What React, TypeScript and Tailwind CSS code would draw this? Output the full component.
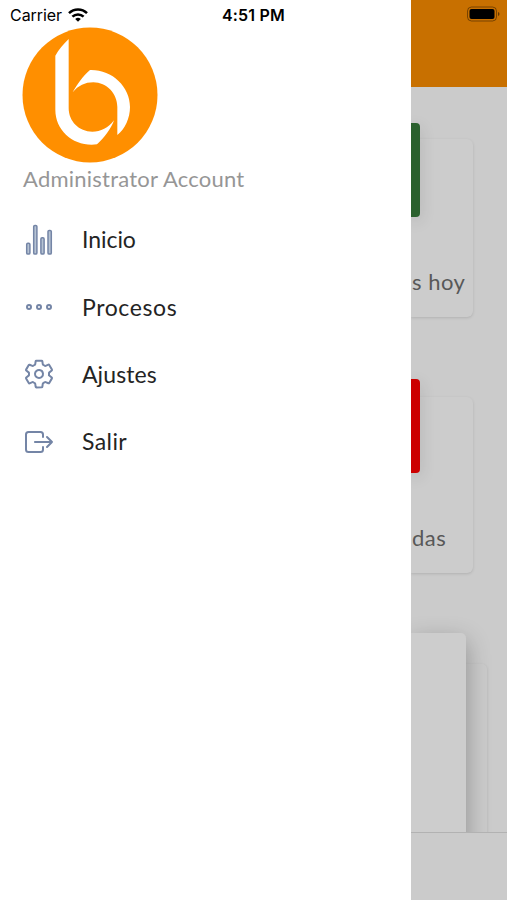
import { IoEllipsisHorizontalOutline, IoSettingsOutline, IoExitOutline } from "react-icons/io5";

function StatsIcon({ className }: { className?: string }) {
  return (
    <svg viewBox="0 0 32 32" className={className} fill="#b6c3d3" stroke="currentColor" strokeWidth="1.5">
      <rect x="3.700" y="19.300" width="3.200" height="10.800" rx="1.200" />
      <rect x="10.700" y="1.400" width="3.200" height="28.700" rx="1.200" />
      <rect x="17.900" y="13.700" width="3.200" height="16.400" rx="1.200" />
      <rect x="25" y="6.400" width="3.300" height="23.700" rx="1.200" />
    </svg>
  );
}

const menuItems = [
  { label: "Inicio", icon: StatsIcon, spacing: "tracking-[-0.05px]" },
  { label: "Procesos", icon: IoEllipsisHorizontalOutline, spacing: "tracking-[0.6px]" },
  { label: "Ajustes", icon: IoSettingsOutline, spacing: "tracking-[0.1px]" },
  { label: "Salir", icon: IoExitOutline, spacing: "tracking-[0.4px]" },
];

function Logo() {
  return (
    <svg viewBox="66 82 408 408" className="block h-[136px] w-[136px]">
      <circle cx="270" cy="286" r="202.5" fill="#ff8f00" />
      <path
        fill="#fff"
        d="M206 118C190 134 176 150 166 168V330C166 390 215 435 275 435L291 434C312 415 335 385 342 362C325 385 302 396 277 396C237 396 206 365 206 325Z"
      />
      <path
        fill="#fff"
        d="M218 278C230 255 250 228 270 211C335 209 390 260 390 322C390 355 375 388 352 406V322C352 282 320 248 280 248C255 248 235 258 218 278Z"
      />
    </svg>
  );
}

function WifiIcon() {
  return (
    <svg viewBox="0 0 20 14" className="h-[14px] w-5" fill="none" stroke="#000" strokeWidth="2.5">
      <path d="M1 5.200a12.800 12.800 0 0 1 18 0" />
      <path d="M4.400 8.700a8 8 0 0 1 11.200 0" />
      <path d="M10 13.800L7.200 11a4 4 0 0 1 5.600 0z" fill="#000" stroke="none" />
    </svg>
  );
}

function StatusBar() {
  return (
    <div className="absolute inset-x-0 top-0 z-20 grid h-[29px] grid-cols-3 items-center pl-[10px] pr-[7px] font-['Inter',sans-serif] text-black">
      <div className="flex items-center gap-[6px] text-[16px] tracking-[-0.05px]">
        <span>Carrier</span>
        <WifiIcon />
      </div>
      <div className="-ml-[3px] text-center text-[16px] font-semibold tracking-[0.2px]">4:51 PM</div>
      <svg viewBox="0 0 34 16" className="-mt-[2px] h-4 w-[34px] justify-self-end">
        <rect x="1.5" y="1" width="29" height="14" rx="4" fill="none" stroke="#000" strokeOpacity="0.4" />
        <rect x="3.5" y="3" width="25" height="10" rx="2" />
        <path d="M32 6v4q1.500-.7 1.500-2t-1.500-2z" fillOpacity="0.5" />
      </svg>
    </div>
  );
}

function Drawer() {
  return (
    <aside className="flex h-full w-[411px] shrink-0 flex-col bg-white pt-[27px]">
      <div className="pl-[22px]">
        <Logo />
        <p className="pl-px text-[22px] leading-8 tracking-[0.23px] text-[#969696]">Administrator Account</p>
      </div>
      <nav className="mt-[11px] flex flex-col">
        {menuItems.map(({ label, icon: Icon, spacing }) => (
          <a key={label} className="flex h-[67.3px] items-center gap-[27.5px] pl-[22.5px]">
            <Icon className="h-8 w-8 text-[#7485a6]" />
            <span className={`text-[23px] text-[#242424] ${spacing}`}>{label}</span>
          </a>
        ))}
      </nav>
    </aside>
  );
}

function StatCard({ text, tile, className }: { text: string; tile: string; className: string }) {
  return (
    <div className={`flex w-[62px] flex-col rounded-r-[6px] bg-[#cccccc] shadow-[0_1px_3px_rgba(0,0,0,0.13)] ${className}`}>
      <div className={`h-[94px] w-[9px] rounded-r-[4px] shadow-[0_4px_16px_rgba(0,0,0,0.14)] ${tile}`} />
      <span className="mt-[49px] whitespace-nowrap pl-px text-[22px] leading-8 tracking-[0.5px] text-[#585858]">{text}</span>
    </div>
  );
}

function Dashboard() {
  return (
    <main className="flex h-full min-w-0 flex-1 flex-col overflow-hidden bg-[#cbcbcb]">
      <header className="h-[87px] shrink-0 bg-[#c87000]" />
      <section className="h-[745px] shrink-0 overflow-hidden">
        <StatCard text="s hoy" tile="-mt-[16px] bg-[#2a602d]" className="mt-[52px] h-[178px]" />
        <StatCard text="das" tile="-mt-[18px] bg-[#cc0000]" className="mt-[80px] h-[176px]" />
        <div className="mt-[91px] h-[240px] w-[76px] rounded-tr-[5px] shadow-[0_1px_3px_rgba(0,0,0,0.13)]">
          <div className="relative -top-[31px] h-[280px] w-[55px] rounded-tr-[5px] bg-[#cdcdcd] shadow-[0_8px_24px_rgba(0,0,0,0.3)]" />
        </div>
      </section>
      <footer className="flex-1 border-t border-[#b2b2b2] bg-[#cbcbcb]" />
    </main>
  );
}

export default function App() {
  return (
    <div className="relative flex h-[900px] w-[507px] overflow-hidden bg-white font-['Lato',sans-serif]">
      <StatusBar />
      <Drawer />
      <Dashboard />
    </div>
  );
}
